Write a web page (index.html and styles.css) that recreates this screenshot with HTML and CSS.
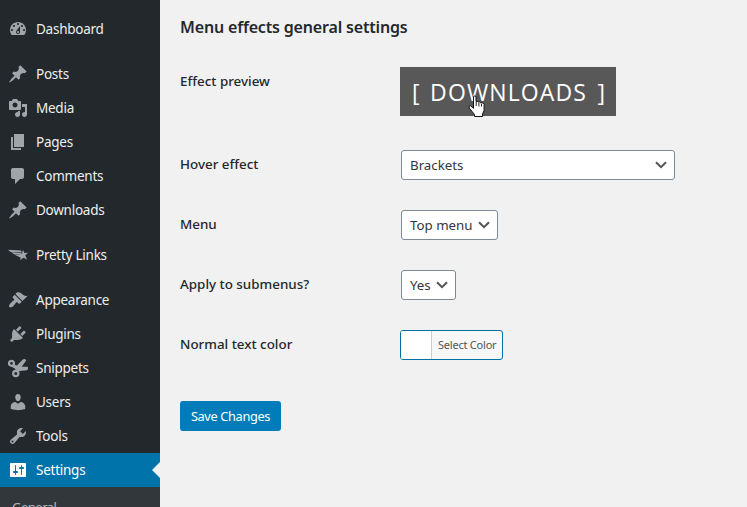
FILE: index.html
```html
<!DOCTYPE html>
<html lang="en">
<head>
<meta charset="utf-8">
<title>Menu effects</title>
<link rel="stylesheet" href="styles.css">
</head>
<body>
<nav class="sidebar">
  <a class="item"><svg class="icon" viewBox="0 0 20 20"><path d="M3.76 16h12.48c1.1-1.37 1.76-3.11 1.76-5 0-4.42-3.58-8-8-8s-8 3.58-8 8c0 1.89.66 3.63 1.76 5zM10 4c.55 0 1 .45 1 1s-.45 1-1 1-1-.45-1-1 .45-1 1-1zM6 6c.55 0 1 .45 1 1s-.45 1-1 1-1-.45-1-1 .45-1 1-1zm8 0c.55 0 1 .45 1 1s-.45 1-1 1-1-.45-1-1 .45-1 1-1zm-5.370 5.550L12 7v6c0 1.100-.9 2-2 2s-2-.9-2-2c0-.57.24-1.080.63-1.450zM4 10c.55 0 1 .45 1 1s-.45 1-1 1-1-.45-1-1 .45-1 1-1zm12 0c.55 0 1 .45 1 1s-.45 1-1 1-1-.45-1-1 .45-1 1-1zm-5 3c0-.55-.45-1-1-1s-1 .45-1 1 .45 1 1 1 1-.45 1-1z" fill-rule="evenodd"/></svg><span>Dashboard</span></a>
  <div class="gap"></div>
  <a class="item"><svg class="icon" viewBox="0 0 20 20"><path d="M10.440 3.020l1.820-1.820 6.360 6.350-1.830 1.820c-1.050-.68-2.480-.57-3.410.36l-.75.75c-.92.93-1.040 2.350-.35 3.410l-1.830 1.820-2.410-2.410-2.800 2.790c-.42.42-3.380 2.710-3.800 2.290s1.860-3.390 2.280-3.810l2.790-2.790L4.100 9.360l1.830-1.820c1.050.69 2.480.57 3.400-.36l.75-.75c.93-.92 1.050-2.350.36-3.410z"/></svg><span>Posts</span></a>
  <a class="item"><svg class="icon" viewBox="0 0 20 20"><path fill-rule="evenodd" d="M13 11V4c0-.55-.45-1-1-1h-1.670L9 1H5L3.670 3H2c-.55 0-1 .45-1 1v7c0 .55.45 1 1 1h10c.55 0 1-.45 1-1zM7 4.500c1.380 0 2.500 1.120 2.500 2.500S8.380 9.500 7 9.500 4.500 8.380 4.500 7 5.620 4.500 7 4.500zM14 6h5v10.500c0 1.380-1.120 2.500-2.500 2.500S14 17.880 14 16.500s1.120-2.500 2.500-2.500c.17 0 .34.02.5.05V9h-3V6zm-4 8.050V13h2v3.500c0 1.380-1.120 2.500-2.500 2.500S7 17.880 7 16.500 8.120 14 9.500 14c.17 0 .34.02.5.05z"/></svg><span>Media</span></a>
  <a class="item"><svg class="icon" viewBox="0 0 20 20"><path d="M6 15V2h10v13H6zm-1 1h8v2H3V5h2v11z"/></svg><span>Pages</span></a>
  <a class="item"><svg class="icon" viewBox="0 0 20 20"><path d="M5 2h9c1.100 0 2 .9 2 2v7c0 1.100-.9 2-2 2h-2l-5 5v-5H5c-1.100 0-2-.9-2-2V4c0-1.100.9-2 2-2z"/></svg><span>Comments</span></a>
  <a class="item"><svg class="icon" viewBox="0 0 20 20"><path d="M10.440 3.020l1.820-1.820 6.360 6.350-1.830 1.820c-1.050-.68-2.480-.57-3.410.36l-.75.75c-.92.93-1.040 2.350-.35 3.410l-1.830 1.820-2.410-2.410-2.800 2.790c-.42.42-3.380 2.710-3.800 2.290s1.860-3.390 2.280-3.810l2.790-2.790L4.100 9.360l1.830-1.820c1.050.69 2.480.57 3.400-.36l.75-.75c.93-.92 1.050-2.350.36-3.410z"/></svg><span>Downloads</span></a>
  <div class="gap"></div>
  <a class="item"><svg class="icon" viewBox="0 0 20 20"><path d="M0 4.800 13 5.600l1 2L2.600 6.900zM3.200 7.300l10 .9-.6 1.600-7-.8zM6 9.600l6 .3 1.300 1.400-.5 1.500zM15 4.800l1.400 3.200 3.600-.2-2.700 2.500 1.700 4.200-3.500-1.800-3.400 2.500.9-4-2.700-2.200 3.700-.6z"/></svg><span>Pretty Links</span></a>
  <div class="gap"></div>
  <a class="item"><svg class="icon" viewBox="0 0 20 20"><path d="M14.480 11.060L7.410 3.990l1.500-1.500c.5-.56 2.300-.47 3.510.32 1.210.8 1.430 1.280 2.910 2.100 1.180.64 2.450 1.260 4.450.85zm-.71.71L6.700 4.700 4.930 6.470c-.39.39-.39 1.020 0 1.410l1.060 1.060c.39.39.39 1.030 0 1.420-.6.6-1.430 1.110-2.210 1.690-.35.26-.7.53-1.010.84C1.430 14.230.4 16.080 1.400 17.070c.99 1 2.840-.03 4.180-1.360.31-.31.58-.66.85-1.020.57-.78 1.080-1.610 1.690-2.210.39-.39 1.020-.39 1.410 0l1.060 1.060c.39.39 1.020.39 1.410 0z"/></svg><span>Appearance</span></a>
  <a class="item"><svg class="icon" viewBox="0 0 20 20"><path d="M13.110 4.360L9.870 7.600 8 5.730l3.240-3.240c.35-.34 1.050-.2 1.560.32.52.51.66 1.210.31 1.550zm-8 1.770l.91-1.120 9.010 9.010-1.190.84c-.71.71-2.630 1.160-3.820 1.160H6.140L4.900 17.260c-.59.59-1.540.59-2.120 0-.59-.58-.59-1.530 0-2.120l1.240-1.240v-3.880c0-1.130.4-3.190 1.090-3.890zm7.260 3.970l3.240-3.240c.34-.35 1.040-.21 1.550.31.52.51.66 1.210.31 1.550l-3.240 3.250z"/></svg><span>Plugins</span></a>
  <a class="item"><svg class="icon" viewBox="0 0 20 20"><g fill="none" stroke="currentColor" stroke-width="2.200"><circle cx="3.500" cy="5.300" r="2.500"/><circle cx="7.800" cy="15.500" r="2.600"/></g><path d="M5 6.500 9 7.600 14.500 1.800q2.200-1.600 3.800.4L13.700 8.700l5.900.1q1.200 1.800-.6 3.500L11.500 13l-1.700 1.800-2.700-2.100L7.500 10.900 4 8.900z"/></svg><span>Snippets</span></a>
  <a class="item"><svg class="icon" viewBox="0 0 20 20"><path d="M10 9.250c-2.270 0-2.730-3.440-2.730-3.440C7 4.020 7.820 2 9.970 2c2.160 0 2.980 2.020 2.710 3.810 0 0-.41 3.440-2.680 3.440zm0 2.570L12.720 10c2.390 0 4.520 2.330 4.520 4.530v2.490s-3.650 1.130-7.240 1.130c-3.650 0-7.240-1.130-7.240-1.130v-2.490c0-2.250 1.940-4.480 4.470-4.480z"/></svg><span>Users</span></a>
  <a class="item"><svg class="icon" viewBox="0 0 20 20"><path fill-rule="evenodd" d="M16.680 9.770c-1.340 1.340-3.300 1.670-4.950.99l-5.410 6.520c-.99.99-2.590.99-3.580 0s-.99-2.590 0-3.570l6.520-5.420c-.68-1.650-.35-3.610.99-4.950 1.280-1.280 3.120-1.620 4.720-1.060l-2.890 2.890 2.820 2.820 2.860-2.870c.53 1.580.18 3.390-1.080 4.650zM3.810 16.210c.4.39 1.040.39 1.430 0 .4-.4.4-1.040 0-1.430-.39-.4-1.030-.4-1.430 0-.39.39-.39 1.030 0 1.430z"/></svg><span>Tools</span></a>
  <a class="item current"><svg class="icon" viewBox="0 0 20 20"><path fill-rule="evenodd" d="M18 16V4c0-.55-.45-1-1-1H3c-.55 0-1 .45-1 1v12c0 .55.45 1 1 1h14c.55 0 1-.45 1-1zM8 11h1c.55 0 1 .45 1 1s-.45 1-1 1H8v1.500c0 .28-.22.5-.5.5s-.5-.22-.5-.5V13H6c-.55 0-1-.45-1-1s.45-1 1-1h1V5.500c0-.28.22-.5.5-.5s.5.22.5.5V11zm5-2h-1c-.55 0-1-.45-1-1s.45-1 1-1h1V5.500c0-.28.22-.5.5-.5s.5.22.5.5V7h1c.55 0 1 .45 1 1s-.45 1-1 1h-1v5.500c0 .28-.22.5-.5.5s-.5-.22-.5-.5V9z"/></svg><span>Settings</span></a>
  <div class="submenu"><a class="general">General</a></div>
</nav>
<main class="content">
  <h2><span>Menu effects general settings</span></h2>
  <div class="row preview-row"><div class="label"><span>Effect preview</span></div>
    <div class="preview"><span class="br">[</span><span class="word">DOWNLOADS</span><span class="br">]</span>
      <svg class="cursor" viewBox="0 0 17 22"><path d="M5.500 1.500Q6.900.2 8 1.700V6.500q1.300-.7 2.300.6 1.500-.6 2.500.8 2.900-.6 3.300 1.200v6.500l-1.500 3.200V21.500H6.500v-2L1.200 13q-.8-2.200 1.200-2.300l3.100 2.600z" fill="#fff" stroke="#111" stroke-width="1"/><path d="M8.200 7v4M10.900 8v3.500M13.500 9v2.500" fill="none" stroke="#222"/></svg>
    </div></div>
  <div class="row"><div class="label"><span>Hover effect</span></div><div class="select wide"><span>Brackets</span><svg class="chev" viewBox="0 0 12 8"><path d="M1 1.200 6 6.200 11 1.200"/></svg></div></div>
  <div class="row"><div class="label"><span>Menu</span></div><div class="select medium"><span>Top menu</span><svg class="chev" viewBox="0 0 12 8"><path d="M1 1.200 6 6.200 11 1.200"/></svg></div></div>
  <div class="row"><div class="label"><span>Apply to submenus?</span></div><div class="select small"><span>Yes</span><svg class="chev" viewBox="0 0 12 8"><path d="M1 1.200 6 6.200 11 1.200"/></svg></div></div>
  <div class="row"><div class="label"><span>Normal text color</span></div><div class="picker"><i class="swatch"></i><span class="pick">Select Color</span></div></div>
  <button class="save"><span>Save Changes</span></button>
</main>
</body>
</html>
```
FILE: styles.css
```css
* { box-sizing: border-box; }
body {
  margin: 0;
  height: 507px;
  display: flex;
  overflow: hidden;
  background: #f1f1f1;
  color: #23282d;
  font-family: "Noto Sans", "Open Sans", sans-serif;
  font-size: 13px;
}
.sidebar {
  width: 160px;
  height: 507px;
  padding-top: 12px;
  background: #23282d;
  color: #eee;
  overflow: hidden;
  flex: none;
}
.item {
  position: relative;
  height: 34px;
  padding-left: 8px;
  display: flex;
  align-items: center;
  gap: 8px;
  font-size: 13.5px;
  letter-spacing: -.25px;
}
.icon {
  width: 20px;
  height: 20px;
  color: #a0a5aa;
  fill: currentColor;
  flex: none;
}
.gap { height: 11px; }
.current { background: #0073aa; color: #fff; }
.current .icon { color: #fff; }
.current::after {
  content: "";
  position: absolute;
  right: 0;
  top: 9px;
  border: 8px solid transparent;
  border-left: 0;
  border-right-color: #f1f1f1;
}
.submenu {
  height: 60px;
  background: #32373c;
  padding: 11px 12px 0;
  color: #b4b9be;
  line-height: 18px;
  letter-spacing: -.5px;
}
.content { flex: 1; padding: 15px 0 0 20px; }
h2 {
  margin: 0 0 28px;
  font-size: 16px;
  line-height: 24px;
  font-weight: 600;
  letter-spacing: -.17px;
}
.row { display: flex; height: 60px; }
.preview-row { height: 83px; }
.label {
  width: 220px;
  padding-top: 5px;
  line-height: 18px;
  font-size: 13.4px;
  font-weight: 500;
}
.preview {
  position: relative;
  width: 216px;
  height: 49px;
  display: flex;
  align-items: center;
  justify-content: space-between;
  padding: 0 11px 0 12px;
  background: #585858;
  color: #fff;
  font-family: "Open Sans", sans-serif;
  font-size: 23px;
}
.br { font-weight: 500; }
.word { letter-spacing: 1.1px; }
.cursor { position: absolute; left: 68px; top: 28px; width: 17px; height: 22px; }
.select {
  height: 30px;
  margin-left: 1px;
  padding: 0 7px 0 8px;
  display: flex;
  align-items: center;
  justify-content: space-between;
  border: 1px solid #7e8993;
  border-radius: 3px;
  background: #fff;
  color: #32373c;
  font-size: 13.3px;
}
.wide { width: 274px; }
.medium { width: 97px; }
.small { width: 55px; }
.chev { width: 12px; height: 8px; fill: none; stroke: #555; stroke-width: 2; }
.picker {
  display: flex;
  width: 103px;
  height: 30px;
  border: 1px solid #0071a1;
  border-radius: 3px;
  background: #f7f7f7;
  overflow: hidden;
  color: #555;
  font-size: 11px;
  letter-spacing: -.22px;
  line-height: 28px;
}
.swatch { width: 31px; background: #fff; border-right: 1px solid #ccc; }
.pick { margin-left: 6px; white-space: nowrap; }
.save {
  display: block;
  width: 101px;
  height: 30px;
  margin: 11px 0 0;
  padding: 0;
  border: 0;
  border-radius: 3px;
  background: #007cba;
  color: #fff;
  font: 12.8px "Noto Sans", sans-serif;
  letter-spacing: -.36px;
}
```
